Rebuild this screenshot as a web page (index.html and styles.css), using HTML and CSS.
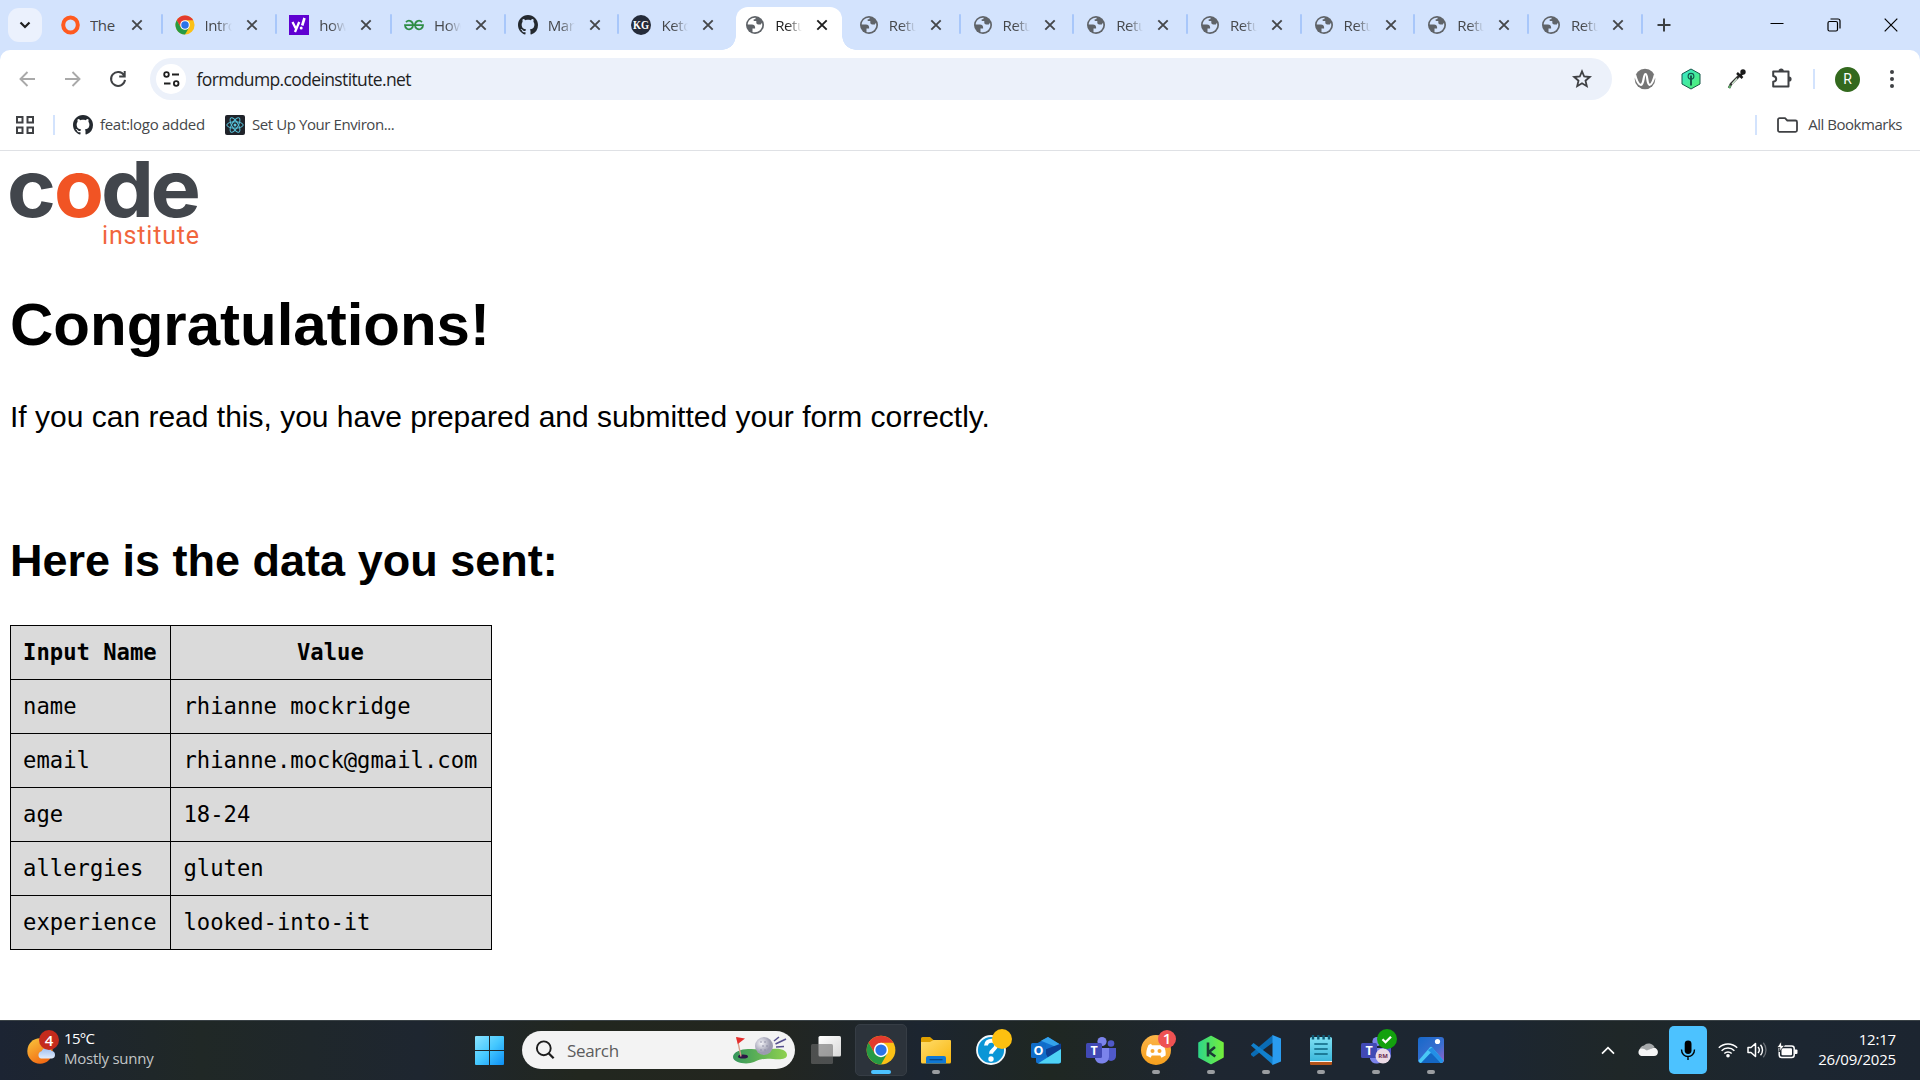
FILE: index.html
```html
<!DOCTYPE html>
<html lang="en">
<head>
<meta charset="utf-8">
<title>Return of form data</title>
<link rel="stylesheet" href="styles.css">
</head>
<body>
<svg class="defs" width="0" height="0">
  <defs>
    <linearGradient id="gwin" x1="0" y1="0" x2="1" y2="1"><stop offset="0" stop-color="#8be4ff"/><stop offset=".5" stop-color="#45c8ff"/><stop offset="1" stop-color="#0d8ff5"/></linearGradient>
    <linearGradient id="gsun" x1="0" y1="0" x2=".6" y2="1"><stop offset="0" stop-color="#f9c73c"/><stop offset="1" stop-color="#f26a14"/></linearGradient>
    <linearGradient id="gcloud" x1="0" y1="0" x2="0" y2="1"><stop offset="0" stop-color="#9dbdf0"/><stop offset="1" stop-color="#e1ecfc"/></linearGradient>
    <linearGradient id="gfold" x1="0" y1="0" x2="1" y2="1"><stop offset="0" stop-color="#ffdc6b"/><stop offset="1" stop-color="#f9b60d"/></linearGradient>
    <linearGradient id="gkey" x1="0" y1="0" x2="1" y2="1"><stop offset="0" stop-color="#36e6d1"/><stop offset="1" stop-color="#53f06b"/></linearGradient>
    <linearGradient id="gk" x1="0" y1="0" x2="1" y2="0"><stop offset="0" stop-color="#2fd687"/><stop offset="1" stop-color="#73ee3c"/></linearGradient>
    <linearGradient id="gphoto" x1="0" y1="0" x2="1" y2="1"><stop offset="0" stop-color="#1668c9"/><stop offset=".6" stop-color="#3b6fd0"/><stop offset="1" stop-color="#9a5fc8"/></linearGradient>
    <linearGradient id="ggreen" x1="0" y1="0" x2="1" y2="0"><stop offset="0" stop-color="#35965c"/><stop offset="1" stop-color="#8fd14f"/></linearGradient>
    <radialGradient id="gball" cx=".35" cy=".35"><stop offset="0" stop-color="#f4f4f8"/><stop offset="1" stop-color="#9c9cb0"/></radialGradient>
    <linearGradient id="gnote" x1="0" y1="0" x2="0" y2="1"><stop offset="0" stop-color="#7fe0f3"/><stop offset="1" stop-color="#3cb8dc"/></linearGradient>
    <linearGradient id="gtv" x1="0" y1="0" x2="1" y2="1"><stop offset="0" stop-color="#ffffff"/><stop offset="1" stop-color="#d8d8d8"/></linearGradient>
    <linearGradient id="gdisc" x1="0" y1="0" x2="0" y2="1"><stop offset="0" stop-color="#fbb448"/><stop offset="1" stop-color="#f6a01e"/></linearGradient>
    <symbol id="chrome" viewBox="0 0 48 48">
      <circle cx="24" cy="24" r="23" fill="#fbc116"/>
      <path d="M4.100 12.500 14 29.700 24 24V12.500H43.900A23 23 0 0 0 4.100 12.500Z" fill="#e33b2e"/>
      <path d="M4.100 12.500A23 23 0 0 0 24 47L34 29.700 24 35 14 29.700Z" fill="#269a44"/>
      <circle cx="24" cy="24" r="11.500" fill="#fff"/><circle cx="24" cy="24" r="9" fill="#2a73e8"/>
    </symbol>
    <symbol id="github" viewBox="0 0 16 16"><path fill="#24292f" d="M8 0C3.580 0 0 3.580 0 8c0 3.540 2.290 6.530 5.470 7.590.4.070.55-.17.55-.38 0-.19-.01-.82-.01-1.490-2.010.37-2.530-.49-2.690-.94-.09-.23-.48-.94-.82-1.130-.28-.15-.68-.52-.01-.53.63-.01 1.080.58 1.230.82.72 1.210 1.870.87 2.330.66.070-.52.28-.87.51-1.070-1.780-.2-3.640-.89-3.640-3.950 0-.87.31-1.590.82-2.150-.08-.2-.36-1.020.08-2.120 0 0 .67-.21 2.200.82.64-.18 1.320-.27 2-.27s1.360.09 2 .27c1.530-1.040 2.200-.82 2.200-.82.44 1.100.16 1.920.08 2.120.51.56.82 1.270.82 2.150 0 3.070-1.870 3.750-3.650 3.950.29.25.54.73.54 1.480 0 1.070-.01 1.930-.01 2.200 0 .21.15.46.55.38A8.010 8.010 0 0 0 16 8c0-4.420-3.580-8-8-8z"/></symbol>
    <symbol id="globe" viewBox="0 0 20 20">
      <circle cx="10" cy="10" r="9" fill="#5f6368"/>
      <path fill="var(--land, #d3e3fd)" d="M10.800 2.700C6.500 2.200 2.700 5.600 2.700 9.600h4.300c1.900 0 3.100 1.200 3.100 2.800v1.100H7.500v3.400c4.800 1.500 9.800-2 9.800-6.900 0-.9-.2-1.600-.4-2.300l-1.100 1.700h-2.500c-1.200 0-2-.8-2-2V6H8.700V4.300h1.500z"/>
    </symbol>
    <symbol id="x" viewBox="0 0 12 12"><path d="M1.300 1.300l9.400 9.400M10.700 1.300l-9.400 9.400" stroke="currentColor" stroke-width="1.900" fill="none"/></symbol>
    <symbol id="teams" viewBox="0 0 30 30">
      <circle cx="25" cy="7.500" r="3.300" fill="#5059c9"/><path d="M20 12h10v8a5 5 0 0 1-10 0z" fill="#5059c9"/>
      <circle cx="16" cy="5.500" r="4.600" fill="#7b83eb"/><path d="M9 12h14v9a7.300 7.300 0 0 1-14 2z" fill="#7b83eb"/>
      <rect x="0" y="7" width="16" height="15" rx="1.500" fill="#4149b5"/>
      <text x="8" y="19" text-anchor="middle" class="t-teams">T</text>
    </symbol>
  </defs>
</svg>

<header class="tabstrip">
  <div class="tabsearch"><svg width="12" height="8" viewBox="0 0 12 8"><path d="M1.500 1.500 6 6l4.500-4.500" fill="none" stroke="#1f1f1f" stroke-width="2.200"/></svg></div>
  <div class="tab first"><svg class="fav" viewBox="0 0 20 20"><ellipse cx="9.500" cy="10" rx="7.300" ry="7.500" fill="none" stroke="#ff5a1f" stroke-width="4"/></svg><span class="label">The</span><svg class="close"><use href="#x"/></svg></div>
  <div class="tab wide"><svg class="fav"><use href="#chrome"/></svg><span class="label">Intro</span><svg class="close"><use href="#x"/></svg></div>
  <div class="tab wide"><svg class="fav" viewBox="0 0 20 20"><rect width="20" height="20" fill="#5f01d1"/><path d="M3.500 7l3.200 6.200M10.200 7 6 17" stroke="#fff" stroke-width="2.300" fill="none"/><path d="M15.500 3 13.200 10.500" stroke="#fff" stroke-width="2.600"/><circle cx="12.200" cy="13" r="1.500" fill="#fff"/></svg><span class="label">how</span><svg class="close"><use href="#x"/></svg></div>
  <div class="tab"><svg class="fav" viewBox="0 0 20 20"><g fill="none" stroke="#2f8d46" stroke-width="1.800"><path d="M2 7.200C5 4 9 6.500 9 10s-3.300 5.500-6 3.800C1.500 12.700 1 11.500 1 10.200h18c0 1.300-.5 2.500-2 3.600-2.700 1.700-6-.3-6-3.800s4-6 7-2.800"/></g></svg><span class="label">How</span><svg class="close"><use href="#x"/></svg></div>
  <div class="tab"><svg class="fav"><use href="#github"/></svg><span class="label">Mar</span><svg class="close"><use href="#x"/></svg></div>
  <div class="tab nosep"><svg class="fav" viewBox="0 0 20 20"><circle cx="10" cy="10" r="10" fill="#242b3a"/><text x="10" y="14" text-anchor="middle" textLength="16" lengthAdjust="spacingAndGlyphs" class="t-kg">KG</text></svg><span class="label">Keto</span><svg class="close"><use href="#x"/></svg></div>
  <div class="tab nosep active"><svg class="fav"><use href="#globe"/></svg><span class="label">Retu</span><svg class="close"><use href="#x"/></svg></div>
  <div class="tab"><svg class="fav"><use href="#globe"/></svg><span class="label">Retu</span><svg class="close"><use href="#x"/></svg></div>
  <div class="tab"><svg class="fav"><use href="#globe"/></svg><span class="label">Retu</span><svg class="close"><use href="#x"/></svg></div>
  <div class="tab"><svg class="fav"><use href="#globe"/></svg><span class="label">Retu</span><svg class="close"><use href="#x"/></svg></div>
  <div class="tab"><svg class="fav"><use href="#globe"/></svg><span class="label">Retu</span><svg class="close"><use href="#x"/></svg></div>
  <div class="tab"><svg class="fav"><use href="#globe"/></svg><span class="label">Retu</span><svg class="close"><use href="#x"/></svg></div>
  <div class="tab"><svg class="fav"><use href="#globe"/></svg><span class="label">Retu</span><svg class="close"><use href="#x"/></svg></div>
  <div class="tab"><svg class="fav"><use href="#globe"/></svg><span class="label">Retu</span><svg class="close"><use href="#x"/></svg></div>
  <svg class="newtab" viewBox="0 0 14 14"><path d="M7 .5v13M.5 7h13" stroke="#3c4043" stroke-width="2"/></svg>
  <div class="winbtns">
    <svg width="14" height="14" viewBox="0 0 14 14"><path d="M.5 5.500h13" stroke="#000" stroke-width="1"/></svg>
    <svg width="14" height="14" viewBox="0 0 14 14"><g fill="none" stroke="#000" stroke-width="1.200"><rect x="1" y="3.500" width="9.500" height="9.500" rx="1.500"/><path d="M3.500 1H11a2 2 0 0 1 2 2v7.500"/></g></svg>
    <svg width="14" height="14" viewBox="0 0 14 14"><path d="M.7.700l12.600 12.600M13.300.700.700 13.300" stroke="#000" stroke-width="1.200"/></svg>
  </div>
</header>

<div class="chrome">
  <div class="toolbar">
    <div class="nav">
      <svg viewBox="0 0 18 18"><path d="M9.500 2 2.500 9l7 7M2.500 9H17" fill="none" stroke="#a9a9a9" stroke-width="1.900"/></svg>
      <svg viewBox="0 0 18 18"><path d="M8.500 2l7 7-7 7M15.500 9H1" fill="none" stroke="#a9a9a9" stroke-width="1.900"/></svg>
      <svg viewBox="0 0 18 18"><path d="M15 5.200A7 7 0 1 0 16 9.800M15.700 1v5.500h-5.500" fill="none" stroke="#3f4144" stroke-width="2"/></svg>
    </div>
    <div class="omnibox">
      <div class="site"><svg width="17" height="16" viewBox="0 0 17 16"><g fill="none" stroke="#1f1f1f" stroke-width="1.800"><circle cx="3.500" cy="3.500" r="2.300"/><path d="M9 3.500h7M1 12.500h6.500"/><circle cx="13.200" cy="12.500" r="2.300"/></g></svg></div>
      <span class="url">formdump.codeinstitute.net</span>
      <svg class="star" viewBox="0 0 20 20"><path d="M10 2.300l2.200 5.200 5.600.5-4.300 3.700 1.300 5.500L10 14.300l-4.800 2.900 1.300-5.500L2.200 8l5.600-.5z" fill="none" stroke="#3f4144" stroke-width="1.800"/></svg>
    </div>
    <div class="ext">
      <svg width="22" height="22" viewBox="0 0 22 22"><circle cx="11" cy="11" r="10.300" fill="#757575"/><path d="M1 6.500C3 14 5 17 7 16.800 10 16.400 9.300 6 11.500 6c2.300 0 1.200 10.500 4 10.800 1.800.2 3.800-3.800 5.500-10.300" fill="none" stroke="#fff" stroke-width="2.200"/></svg>
      <svg width="22" height="22" viewBox="0 0 22 22"><path d="M11 1l9 5v10L11 21l-9-5V6z" fill="url(#gkey)" stroke="#16594a" stroke-width="1"/><circle cx="11" cy="8.300" r="2.900" fill="none" stroke="#13564a" stroke-width="1.100"/><path d="M11 7.500v10" stroke="#13564a" stroke-width="1.900"/></svg>
      <svg width="22" height="22" viewBox="0 0 22 22"><path d="M14 8 6 16 4 20" stroke="#333" stroke-width="2.600" fill="none"/><path d="M12 10.500 7 16" stroke="#cfe8d0" stroke-width="1.200" fill="none"/><path d="M5.500 17.500 4 20" stroke="#5fae6a" stroke-width="2.200" fill="none"/><path d="M12 5l5.500 5M15 8l4-4.500" stroke="#1a1a1a" stroke-width="2.600"/><circle cx="18" cy="4" r="2.700" fill="#1a1a1a"/></svg>
      <svg width="22" height="22" viewBox="0 0 22 22"><path d="M2.200 3.500h15.300v15H2.200v-4.700c4-.8 4-5 0-5.800z" fill="none" stroke="#3f4144" stroke-width="2" stroke-linejoin="round"/><path d="M7.600 3a2.600 2.600 0 0 1 5.200 0zM18 8.400a2.600 2.600 0 0 1 0 5.200z" fill="#3f4144"/></svg>
    </div>
    <i class="bar"></i>
    <div class="avatar">R</div>
    <svg class="kebab" viewBox="0 0 6 20"><g fill="#3f4144"><circle cx="3" cy="3" r="2"/><circle cx="3" cy="10" r="2"/><circle cx="3" cy="17" r="2"/></g></svg>
  </div>
  <div class="bookmarks">
    <svg width="18" height="18" viewBox="0 0 18 18"><g fill="none" stroke="#3f4144" stroke-width="2"><rect x="1" y="1" width="5.500" height="5.500"/><rect x="11.500" y="1" width="5.500" height="5.500"/><rect x="1" y="11.500" width="5.500" height="5.500"/><rect x="11.500" y="11.500" width="5.500" height="5.500"/></g></svg>
    <i class="bar"></i>
    <svg class="bm1" width="20" height="20"><use href="#github"/></svg><span class="l1">feat:logo added</span>
    <svg class="bm2" width="20" height="20" viewBox="0 0 20 20"><rect width="20" height="20" rx="2" fill="#20232a"/><g fill="none" stroke="#58c4dc" stroke-width="1"><ellipse cx="10" cy="10" rx="8.200" ry="3.200"/><ellipse cx="10" cy="10" rx="8.200" ry="3.200" transform="rotate(60 10 10)"/><ellipse cx="10" cy="10" rx="8.200" ry="3.200" transform="rotate(120 10 10)"/></g><circle cx="10" cy="10" r="1.500" fill="#58c4dc"/></svg><span class="l2">Set Up Your Environ...</span>
    <div class="all"><i class="bar"></i><svg width="21" height="16" viewBox="0 0 21 16"><path d="M2.500 1.200H8l2.300 2.300h8.200a1.500 1.500 0 0 1 1.500 1.500v8.300a1.500 1.500 0 0 1-1.500 1.500h-16A1.500 1.500 0 0 1 1 13.300V2.700a1.500 1.500 0 0 1 1.500-1.500z" fill="none" stroke="#3f4144" stroke-width="1.800"/></svg><span class="l3">All Bookmarks</span></div>
  </div>
</div>

<main class="page">
  <svg class="logo" width="190" height="90" viewBox="0 0 190 90">
    <g class="t-code">
      <text x="-3" y="56" textLength="49" lengthAdjust="spacingAndGlyphs">c</text>
      <text x="44" y="56" textLength="50" lengthAdjust="spacingAndGlyphs" class="orange">o</text>
      <text x="91" y="56" textLength="53" lengthAdjust="spacingAndGlyphs">d</text>
      <text x="140.500" y="56" textLength="50.500" lengthAdjust="spacingAndGlyphs">e</text>
    </g>
    <text x="92" y="83" textLength="97" class="t-inst">institute</text>
  </svg>
  <h1>Congratulations!</h1>
  <p>If you can read this, you have prepared and submitted your form correctly.</p>
  <h2>Here is the data you sent:</h2>
  <table>
    <tr><th>Input Name</th><th>Value</th></tr>
    <tr><td>name</td><td>rhianne mockridge</td></tr>
    <tr><td>email</td><td>rhianne.mock@gmail.com</td></tr>
    <tr><td>age</td><td>18-24</td></tr>
    <tr><td>allergies</td><td>gluten</td></tr>
    <tr><td>experience</td><td>looked-into-it</td></tr>
  </table>
</main>

<footer class="taskbar">
  <div class="weather">
    <svg width="34" height="38" viewBox="0 0 34 38"><circle cx="14" cy="23" r="12.700" fill="url(#gsun)"/><path d="M15 30.500a3.800 3.800 0 0 1 .5-7.300 5.500 5.500 0 0 1 10-.2 3.800 3.800 0 0 1 .5 7.500z" fill="url(#gcloud)"/><circle cx="23" cy="12" r="10" fill="#c42b1c"/><text x="23" y="17.500" text-anchor="middle" class="t-badge">4</text></svg>
    <div class="wtext"><span class="temp">15°C</span><span class="cond">Mostly sunny</span></div>
  </div>
  <svg class="start" width="29" height="29" viewBox="0 0 29 29"><path d="M1 0h13v14H0V1a1 1 0 0 1 1-1zM15 0h13a1 1 0 0 1 1 1v13H15zM0 15h14v14H1a1 1 0 0 1-1-1zM15 15h14v13a1 1 0 0 1-1 1H15z" fill="url(#gwin)"/></svg>
  <div class="search">
    <svg width="20" height="20" viewBox="0 0 20 20"><circle cx="8.800" cy="8.300" r="6.900" fill="none" stroke="#1d1d1d" stroke-width="1.900"/><path d="M13.600 13.200l5 5" stroke="#1d1d1d" stroke-width="2.300"/></svg>
    <span>Search</span>
    <svg class="golf" width="56" height="30" viewBox="0 0 56 30"><path d="M1 22c0-5 8-8 15-8s14 1 24 0 15 2 15 6-6 5-14 4-12 0-19 3S1 28 1 22z" fill="url(#ggreen)"/><ellipse cx="11" cy="21.500" rx="5" ry="2" fill="#2c1746"/><path d="M5 2.500l4 19" stroke="#d6a08c" stroke-width="1.300"/><path d="M4 2l9 1.500L5.800 9z" fill="#e62e2e"/><circle cx="32" cy="11" r="9" fill="url(#gball)"/><g fill="#8c8ca2"><circle cx="29" cy="7" r=".8"/><circle cx="33" cy="7" r=".8"/><circle cx="31" cy="11" r=".8"/><circle cx="35" cy="11" r=".8"/><circle cx="29" cy="15" r=".8"/><circle cx="33" cy="15" r=".8"/></g><path d="M42 6l5-4M43.500 9 54 4M44 12l8-.5" stroke="#55508f" stroke-width="1.600"/></svg>
  </div>
  <div class="apps">
    <div class="app"><svg viewBox="0 0 30 30"><rect x="7.500" y="1" width="22.500" height="20.500" rx="1.500" fill="url(#gtv)"/><rect x="0" y="9" width="22" height="20" rx="1.500" fill="#6c6c6c" opacity=".6"/></svg></div>
    <div class="app on current"><svg viewBox="0 0 30 30"><use href="#chrome"/></svg></div>
    <div class="app on"><svg viewBox="0 0 30 30"><path d="M0 3.500A1.500 1.500 0 0 1 1.500 2H9l3.500 3v6H0z" fill="#e0a000"/><path d="M0 7h9l3.500-2H29a1 1 0 0 1 1 1v21a1.500 1.500 0 0 1-1.500 1.500h-27A1.500 1.500 0 0 1 0 27z" fill="url(#gfold)"/><path d="M5 28.500V23a2 2 0 0 1 2-2h16a2 2 0 0 1 2 2v5.500z" fill="#0f78d4"/><path d="M8.500 24.700h13" stroke="#08447e" stroke-width="1.200"/></svg></div>
    <div class="app"><svg viewBox="0 0 30 30"><circle cx="15" cy="15" r="14" fill="#0b96d6" stroke="#f4f8fb" stroke-width="1.800"/><path d="M10 10.500c.3-6.500 10.500-6.500 10.200 0-.2 4-5.200 4-5.200 8.200" fill="none" stroke="#fff" stroke-width="4"/><circle cx="15" cy="24" r="2.700" fill="#fff"/><circle cx="26" cy="4" r="10" fill="#fdc010"/></svg></div>
    <div class="app"><svg viewBox="0 0 30 30"><path d="M5 9 17 2l13 8v16a2.500 2.500 0 0 1-2.500 2.500h-20A2.500 2.500 0 0 1 5 26z" fill="#1170cf"/><path d="M10 5.800 17 2l13 8v4z" fill="#35a3ec"/><path d="M13 15l17-6.500V24l-13-1z" fill="#0c3f94"/><path d="M7 28.500 30 14v12a2.500 2.500 0 0 1-2.500 2.500z" fill="#4fd3f5"/><rect x="0" y="8" width="15" height="15" rx="1.500" fill="#0f6cc8"/><text x="7.500" y="20" text-anchor="middle" class="t-teams">O</text></svg></div>
    <div class="app"><svg viewBox="0 -1 30 30"><use href="#teams" width="30" height="30"/></svg></div>
    <div class="app on"><svg viewBox="0 0 30 30"><circle cx="15" cy="15" r="15" fill="url(#gdisc)"/><path d="M10 8.800 7.500 10C5.500 14 5 17.500 5.400 20.500L9.500 22.700l1.300-2.200h8.400l1.300 2.200 4.100-2.200c.4-3-.1-6.500-2.100-10.500L20 8.800l-1 1.500h-8z" fill="#fff"/><circle cx="11.500" cy="16" r="2" fill="#f8a830"/><circle cx="18.500" cy="16" r="2" fill="#f8a830"/><circle cx="26" cy="4" r="9" fill="#ee5253"/><text x="26" y="9.300" text-anchor="middle" class="t-badge">1</text></svg></div>
    <div class="app on"><svg viewBox="0 0 30 30"><path d="M15 1.500 27 8v14L15 28.500 3 22V8z" fill="url(#gk)" stroke="url(#gk)" stroke-width="1.500" stroke-linejoin="round"/><path d="M12 7.500v14M19 12l-6 5 6.300 4.500" fill="none" stroke="#1b3a34" stroke-width="2.600"/></svg></div>
    <div class="app on"><svg viewBox="0 0 30 30"><path d="M2.500 22 0 20v-1.500L22 0v7.500z" fill="#0a6cb5"/><path d="M0 10.500 2.500 8 22 22.500V30z" fill="#1180cc"/><path d="M21.500 0 30 3.500v23L21.500 30z" fill="#2a9cf0"/></svg></div>
    <div class="app on"><svg viewBox="0 0 30 30"><rect x="4" y="25" width="22" height="5" rx="1" fill="#b4541a"/><rect x="4" y="24" width="22" height="3" fill="#f2f2f2"/><path d="M4 3.500A1.500 1.500 0 0 1 5.500 2h19A1.500 1.500 0 0 1 26 3.500V26H4z" fill="url(#gnote)"/><path d="M8.300 9h13.400M8.300 14h13.400M8.300 19h13.400" stroke="#0d6480" stroke-width="1.500"/><path d="M7 0v4.500M12.300 0v4.500M17.600 0v4.500M23 0v4.500" stroke="#0f5a75" stroke-width="2.400"/></svg></div>
    <div class="app on"><svg viewBox="0 -1 30 30"><use href="#teams" width="30" height="30"/><circle cx="22" cy="20" r="7.500" fill="#ecdbe6"/><text x="22" y="22.300" text-anchor="middle" class="t-rm">RM</text><circle cx="26" cy="3" r="10" fill="#13a10e"/><path d="M21.500 3.200l3 3 5.500-5.500" fill="none" stroke="#fff" stroke-width="2.300"/></svg></div>
    <div class="app on"><svg viewBox="0 0 30 30"><rect x="2" y="2" width="26" height="26" rx="3" fill="url(#gphoto)"/><circle cx="21.500" cy="6.500" r="2.600" fill="#fff"/><path d="M2.500 25.500 13.800 12.500a1.600 1.600 0 0 1 2.400 0L27.500 25.500a3 3 0 0 1-2 2.500h-21a3 3 0 0 1-2-2.500z" fill="#49c8f6"/><path d="M5 28 14 18.500a1.500 1.500 0 0 1 2.200 0L25 28z" fill="#1467c4"/><path d="M16.200 12.500 27.500 25.500a3 3 0 0 1-2 2.500L12 15z" fill="#238fe6"/></svg></div>
  </div>
  <div class="tray">
    <svg width="14" height="9" viewBox="0 0 14 9"><path d="M1 7.700l6-6 6 6" fill="none" stroke="#fff" stroke-width="1.700"/></svg>
    <svg class="cloud" width="20" height="14" viewBox="0 0 20 14"><path d="M1.500 7.500A5.500 5.500 0 0 1 6 2.500 6.500 6.500 0 0 1 16.500 4L8 9z" fill="#a5a8aa"/><path d="M3.500 13a3.800 3.800 0 0 1 .3-7.500c2 0 3 .7 5 2L16 4.500c5.500 1.500 5 8.500 0 8.500z" fill="#f5f5f5"/></svg>
    <div class="mic"><svg width="16" height="20" viewBox="0 0 16 20"><rect x="4.700" y=".5" width="6.800" height="13.500" rx="3.400" fill="#000"/><path d="M1.500 9.500c0 9.300 13 9.300 13 0M8 16.500V20" fill="none" stroke="#000" stroke-width="1.400"/></svg></div>
    <svg class="wifi" width="20" height="16" viewBox="0 0 20 16"><g fill="none" stroke="#fff" stroke-width="1.500"><path d="M.8 5.800a13 13 0 0 1 18.400 0M3.600 8.700a9 9 0 0 1 12.800 0M6.300 11.500a5.200 5.200 0 0 1 7.400 0"/></g><circle cx="10" cy="13.700" r="1.800" fill="#fff"/></svg>
    <svg class="vol" width="20" height="16" viewBox="0 0 20 16"><path d="M1 5.500h3L8.500 1.500v13L4 10.500H1z" fill="none" stroke="#fff" stroke-width="1.500" stroke-linejoin="round"/><path d="M11 5a4.500 4.500 0 0 1 0 6M13.500 2.700a8 8 0 0 1 0 10.600" fill="none" stroke="#fff" stroke-width="1.400"/><path d="M16.300.800a11 11 0 0 1 0 14.400" fill="none" stroke="#6b7076" stroke-width="1.300"/></svg>
    <svg class="bat" width="21" height="18" viewBox="0 0 21 18"><rect x="2.200" y="5" width="15" height="11.500" rx="2.500" fill="none" stroke="#fff" stroke-width="1.500"/><path d="M18 8.500h1.500a1 1 0 0 1 1 1v2.500a1 1 0 0 1-1 1H18z" fill="#fff"/><rect x="4.500" y="7.300" width="10.500" height="7" rx="1" fill="#fff"/><path d="M4.500 0 0 6.500h3L2 11l5.500-6.500h-3z" fill="#fff" stroke="#1e262c" stroke-width=".8"/></svg>
    <div class="clock"><span class="time">12:17</span><span class="date">26/09/2025</span></div>
  </div>
</footer>
</body>
</html>
```
FILE: styles.css
```css
* { box-sizing: border-box; }
body { margin: 0; width: 1920px; height: 1080px; overflow: hidden; background: #d3e3fd; font-family: "Open Sans", "Noto Sans", sans-serif; display: flex; flex-direction: column; }
svg { flex: none; display: block; overflow: visible; }
.defs { position: absolute; }

/* tab strip */
.tabstrip { height: 50px; flex: none; background: #d3e3fd; display: flex; align-items: center; padding-left: 8px; }
.tabsearch { width: 34px; height: 34px; border-radius: 11px; background: #ebf1fd; display: flex; align-items: center; justify-content: center; margin-right: 5px; }
.tab { width: 113.700px; height: 50px; flex: none; display: flex; align-items: center; padding-left: 13px; position: relative; color: #45474a; }
.tab.first { width: 114.500px; padding-left: 14px; }
.tab.first .fav { margin-right: 9px; }
.tab.wide { width: 114.800px; }
.tab::after { content: ""; position: absolute; right: -1px; top: 14px; width: 2px; height: 20px; border-radius: 1px; background: #a8c7fa; }
.fav { width: 20px; height: 20px; margin-right: 10px; }
.label { width: 27px; overflow: hidden; white-space: nowrap; font-size: 15px; letter-spacing: -0.400px; line-height: 24px; -webkit-mask-image: linear-gradient(to right, #000 45%, transparent 100%); mask-image: linear-gradient(to right, #000 45%, transparent 100%); }
.first .label { -webkit-mask-image: none; mask-image: none; }
.close { width: 12px; height: 12px; margin-left: 14px; }
.tab.nosep::after { display: none; }
.tab.active { color: #1f1f1f; --land: #fff; }
.tab.active::before { content: ""; position: absolute; z-index: 0; left: 4px; right: 4px; top: 7px; bottom: 0; border-radius: 12px 12px 0 0; background: #fff; }
.tab.active::after { display: block; left: -10px; right: -10px; top: auto; bottom: 0; width: auto; height: 14px; border-radius: 0; z-index: 0; background: radial-gradient(circle at 0 0, transparent 13.500px, #fff 14px) left bottom / 14px 14px no-repeat, radial-gradient(circle at 100% 0, transparent 13.500px, #fff 14px) right bottom / 14px 14px no-repeat; }
.tab.active > * { position: relative; z-index: 1; }
.newtab { width: 14px; height: 14px; margin-left: 15px; }
.winbtns { margin-left: auto; display: flex; gap: 43px; padding-right: 22px; }

/* toolbar and bookmarks */
.chrome { height: 101px; flex: none; background: #fff; border-bottom: 1px solid #dfe1e5; border-radius: 10px 10px 0 0; }
.toolbar { height: 58px; display: flex; align-items: center; padding-left: 18px; }
.nav { display: flex; gap: 27.500px; width: 132px; flex: none; }
.nav svg { width: 18px; height: 18px; }
.omnibox { width: 1462px; height: 42px; border-radius: 21px; background: #ecf1fa; display: flex; align-items: center; padding: 0 20px 0 6px; }
.site { width: 30px; height: 30px; border-radius: 50%; background: #fff; display: flex; align-items: center; justify-content: center; margin-right: 10.500px; }
.url { font-size: 17.500px; letter-spacing: -0.630px; color: #1f1f1f; flex: 1; }
.star { width: 20px; height: 20px; }
.ext { display: flex; gap: 23.500px; margin-left: 22px; }
.bar { width: 2px; height: 20px; background: #d3e3fd; flex: none; }
.toolbar > .bar { margin-left: 20px; }
.avatar { width: 25px; height: 25px; border-radius: 50%; background: #33691e; color: #fff; font: 14px/25px Roboto, sans-serif; text-align: center; margin-left: 20.500px; flex: none; }
.kebab { width: 6px; height: 20px; margin-left: 29px; }
.bookmarks { height: 34px; display: flex; align-items: center; padding: 0 18px 0 15.500px; font-size: 15px; color: #45474a; white-space: nowrap; }
.bookmarks span { line-height: 20px; padding-bottom: 2px; }
.bookmarks > .bar { margin: 0 18.500px 0 19px; }
.bookmarks .l1 { margin-left: 7px; width: 125px; letter-spacing: -0.300px; }
.bookmarks .l2 { margin-left: 7px; letter-spacing: -0.420px; }
.all { margin-left: auto; display: flex; align-items: center; }
.all svg { margin: 0 10px 0 20px; }
.l3 { letter-spacing: -0.480px; }

/* page */
.page { flex: 1; background: #fff; padding: 10px; font: 30px/34px "Liberation Sans", Arial, sans-serif; color: #000; }
.logo { height: 90px; overflow: hidden; }
.t-code { font: 700 79px Inter, sans-serif; fill: #42464c; }
.t-code .orange { fill: #f15424; }
.t-inst { font: 25px Roboto, sans-serif; fill: #f1653c; }
.page h1 { font-size: 60px; line-height: 68px; margin: 40px 0 41px; }
.page p { margin: 0 0 101px; }
.page h2 { font-size: 45px; line-height: 52px; margin: 0 0 38px; }
table { border-collapse: collapse; background: #dadada; font: 22.200px/28px "DejaVu Sans Mono", monospace; }
th, td { border: 1px solid #000; height: 54px; padding: 0 13.700px 1px 12.100px; }
td { text-align: left; }

/* taskbar */
.taskbar { height: 60px; flex: none; display: flex; align-items: center; color: #fff; border-top: 1px solid #3a4246; background: linear-gradient(90deg, #1c2433 0, #202826 200px, #1e2630 420px, #22271f 580px, #23261f 760px, #1c2530 920px, #1f2722 1050px, #1e2631 1200px, #1c2631 1500px, #1f2728 1620px, #1c2631 1800px, #1c2530 100%); }
.taskbar > * { margin-bottom: 1px; }
.weather { display: flex; align-items: center; padding-left: 26px; width: 475px; }
.weather > svg { margin: 0 4px 6px 0; }
.wtext { display: flex; flex-direction: column; font-size: 15px; line-height: 20px; padding-bottom: 4px; }
.cond { color: #c2c5c7; letter-spacing: -0.250px; }
.temp { letter-spacing: -0.700px; }
.search { width: 273px; height: 38px; border-radius: 19px; background: #f3f3f3; margin-left: 18px; display: flex; align-items: center; padding: 0 7px 0 13px; flex: none; }
.search span { font-size: 17px; color: #5c5c5c; margin-left: 12px; flex: 1; letter-spacing: -0.350px; }
.apps { display: flex; margin-left: 3.500px; }
.app { width: 55px; height: 60px; display: flex; align-items: center; justify-content: center; position: relative; }
.app svg { width: 30px; height: 30px; position: relative; }
.app.on::after { content: ""; position: absolute; bottom: 6px; width: 8px; height: 4px; border-radius: 2px; background: #9a9da1; }
.app.current::before { content: ""; position: absolute; width: 50px; height: 50px; border-radius: 5px; background: #2c333b; border: 1px solid #363d45; }
.app.current::after { width: 20px; background: #4cc2ff; }
.t-teams { font: bold 12.500px "Open Sans", sans-serif; fill: #fff; }
.t-badge { font: 600 15px "Open Sans", sans-serif; fill: #fff; }
.t-kg { font: bold 11.500px "Liberation Serif", serif; fill: #fff; }
.t-rm { font: bold 6px "Open Sans", sans-serif; fill: #6b2a50; }
.tray { margin-left: auto; display: flex; align-items: center; padding-right: 24px; }
.cloud { margin-left: 23px; }
.mic { width: 38px; height: 48px; border-radius: 5px; background: #4cc2ff; margin: 0 11px; display: flex; align-items: center; justify-content: center; }
.vol { margin-left: 9px; }
.bat { margin-left: 10px; }
.clock { width: 98px; display: flex; flex-direction: column; text-align: right; font-size: 15px; line-height: 20px; letter-spacing: -0.180px; padding-bottom: 3px; }
```
